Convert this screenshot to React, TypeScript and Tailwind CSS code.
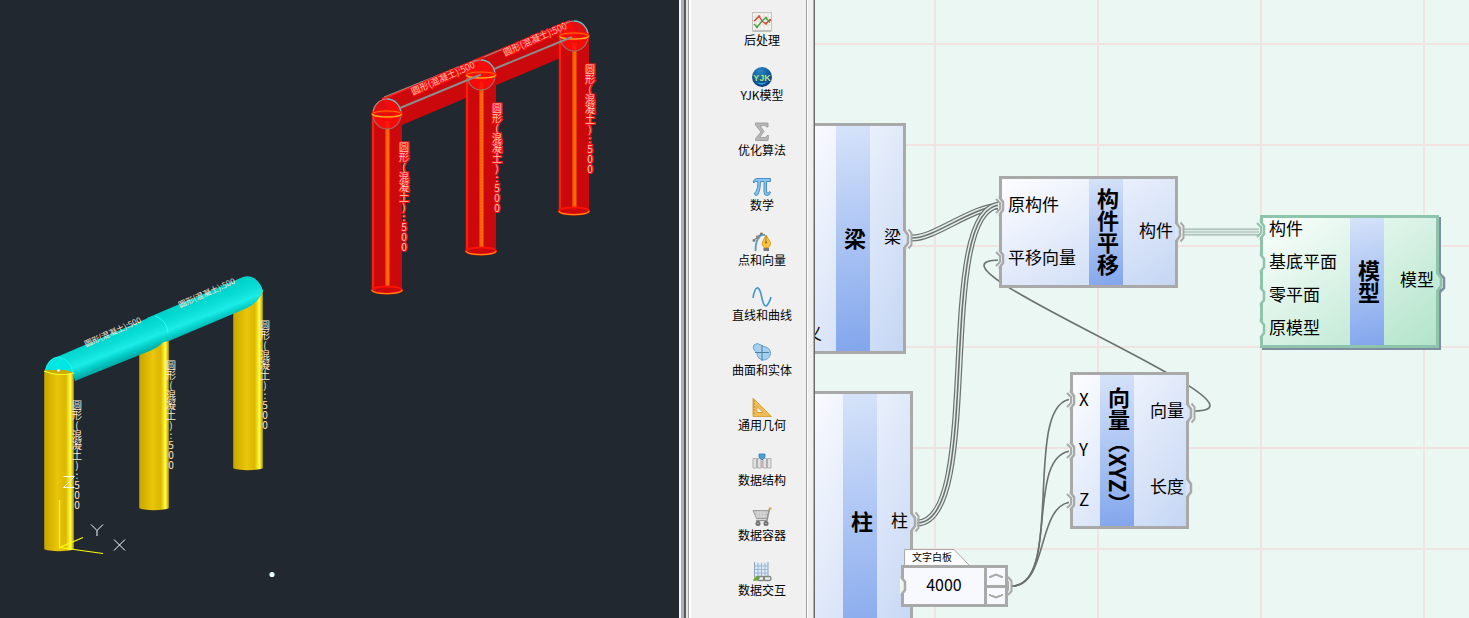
import type { ReactNode } from "react";

const LABEL = "圆形(混凝土):500";

/* ---------- 3D viewport ---------- */

function RedColumn({ x, top, bottom }: { x: number; top: number; bottom: number }) {
  return (
    <g>
      <path d={`M${x} ${top}V${bottom}a15 4 0 0 0 30 0V${top}Z`} fill="#cb080b" />
      <path d={`M${x + 1} ${top}V${bottom}`} stroke="#ff1c08" strokeWidth="2.4" />
      <path d={`M${x + 15.5} ${top + 6}V${bottom - 1}`} stroke="#ff6a00" strokeWidth="4" />
      <path d={`M${x + 14} ${top + 8}V${bottom - 1}`} stroke="#e04a10" strokeWidth="1" strokeDasharray="2 1" />
      <ellipse cx={x + 15} cy={bottom} rx="15" ry="3.6" fill="#cb080b" stroke="#ff1000" strokeWidth="2" />
      <path d={`M${x} ${bottom}a15 3.6 0 0 0 30 0`} fill="none" stroke="#ff8a10" strokeWidth="1.2" />
    </g>
  );
}

function RedJoint({ x, y }: { x: number; y: number }) {
  return (
    <g>
      <circle cx={x} cy={y} r="15" fill="#ff0a0a" fillOpacity="0.85" />
      <path d={`M${x - 14} ${y}a14 15 0 0 0 28 0`} fill="none" stroke="#9a6a68" strokeWidth="1.2" />
      <path d={`M${x - 14} ${y}a14 15 0 0 1 14 -15`} fill="none" stroke="#b08a88" strokeWidth="1.2" />
      <path d={`M${x} ${y - 15}a14 15 0 0 1 14 15`} fill="none" stroke="#62c4c8" strokeWidth="1.4" />
      <ellipse cx={x} cy={y} rx="14.5" ry="3" fill="none" stroke="#ff1800" strokeWidth="3" />
      <ellipse cx={x} cy={y} rx="14.5" ry="3" fill="none" stroke="#ff6a10" strokeWidth="1" />
      <path d={`M${x - 14.5} ${y}a14.5 3 0 0 0 29 0`} fill="none" stroke="#ffb020" strokeWidth="1.2" />
    </g>
  );
}

function YellowColumn({ x, top, bottom }: { x: number; top: number; bottom: number }) {
  return <path d={`M${x} ${top}V${bottom}a15.5 3 0 0 0 30 0V${top}Z`} fill="url(#yellow)" />;
}

function ColumnTag({ x, y, red }: { x: number; y: number; red?: boolean }) {
  return (
    <text
      x={x}
      y={y}
      className="text-[10px] [text-orientation:upright] [writing-mode:vertical-rl]"
      fill={red ? "#ffc4b4" : "#ffe8d4"}
      stroke={red ? "#ff1010" : "none"}
      strokeWidth="2"
      paintOrder="stroke"
    >
      {LABEL}
    </text>
  );
}

function BeamTag({ x, y, red }: { x: number; y: number; red?: boolean }) {
  return (
    <text
      transform={`translate(${x} ${y}) rotate(-24)`}
      className={red ? "text-[9px]" : "text-[8px]"}
      fill={red ? "#ffc4b4" : "#ffe8d4"}
      stroke={red ? "#ff1010" : "none"}
      strokeWidth="2"
      paintOrder="stroke"
    >
      {LABEL}
    </text>
  );
}

function Viewport() {
  return (
    <section aria-label="三维视图" className="min-w-0 flex-[679] overflow-hidden bg-[#222830]">
      <svg width="679" height="618" className="block">
        <defs>
          <linearGradient id="yellow">
            <stop offset="0" stopColor="#8f7c08" />
            <stop offset="0.05" stopColor="#c9a800" />
            <stop offset="0.25" stopColor="#dcb800" />
            <stop offset="0.45" stopColor="#e8c60c" />
            <stop offset="0.72" stopColor="#dcb800" />
            <stop offset="0.8" stopColor="#f0d81c" />
            <stop offset="0.88" stopColor="#ffff4a" />
            <stop offset="0.94" stopColor="#e0cc20" />
            <stop offset="1" stopColor="#8f7c08" />
          </linearGradient>
          <linearGradient id="cyan" gradientUnits="userSpaceOnUse" x1="100" y1="338" x2="111" y2="366">
            <stop offset="0" stopColor="#00d2cc" />
            <stop offset="0.3" stopColor="#0adcd6" />
            <stop offset="0.6" stopColor="#1cece6" />
            <stop offset="0.8" stopColor="#04cec8" />
            <stop offset="1" stopColor="#00aaa6" />
          </linearGradient>
        </defs>

        <path d="M382 99 L570 21 L584 48 L402 125 Z" fill="#cb080b" />
        <path d="M382 99 L570 21" stroke="#ff1c14" strokeWidth="2" />
        <path d="M384 97 L476 60 M484 57 L568 22" stroke="#8c8c8c" strokeWidth="1" />
        <RedColumn x={372} top={115} bottom={290} />
        <RedColumn x={466} top={76} bottom={251} />
        <RedColumn x={559} top={37} bottom={211} />
        <RedJoint x={387} y={114} />
        <RedJoint x={481} y={75} />
        <RedJoint x={574} y={36} />
        <path d="M400 108 L481 74.500 M494 69 L572 37" stroke="#8c8c8c" strokeWidth="2" />
        <BeamTag x={413} y={95} red />
        <BeamTag x={505} y={56} red />
        <ColumnTag x={404} y={142} red />
        <ColumnTag x={497} y={103} red />
        <ColumnTag x={590} y={64} red />

        <YellowColumn x={233} top={290} bottom={468} />
        <YellowColumn x={139} top={330} bottom={508} />
        <YellowColumn x={44} top={371} bottom={549} />
        <path
          d="M147 318 L243 277 Q249 275 254 278 Q261 283 263 291 Q258 303 247 308 L169 341 L150 345 Z"
          fill="url(#cyan)"
        />
        <path
          d="M45 371 Q48 359 59 356 L148 318 Q154 314 161 320 Q169 326 168 335 Q163 345 152 350 L75 381 L73 373 Z"
          fill="url(#cyan)"
        />
        <path d="M155 316 Q167 320 168 333" fill="none" stroke="#2affff" />
        <path d="M45 371 Q48 358 58 357 Q70 358 73 373 Q60 374 45 371 Z" fill="#00e6e2" stroke="#20fafa" strokeWidth="0.8" />
        <path d="M45 370 H66 L74 373 Q60 376 45 371 Z" fill="#cfa900" />
        <path d="M44 371 Q58 377 74 373" fill="none" stroke="#ffff20" />
        <circle cx="58.500" cy="370.500" r="1.300" fill="#f4fff4" />

        <BeamTag x={86} y={347} />
        <BeamTag x={180} y={308} />
        <ColumnTag x={77} y={400} />
        <ColumnTag x={171} y={360} />
        <ColumnTag x={265} y={320} />

        <path d="M59.500 500V547.500L83 537.500M59.500 547.500L103 553.500" fill="none" stroke="#ffff00" strokeWidth="1.200" />
        <g fill="none" stroke="#ffffff" strokeWidth="1">
          <path d="M63.500 476.500H74.500L63.500 487.500H74.500" />
          <path d="M91 524.500L97 530.500L103 524.500M97 530.500V536" />
          <path d="M114 539.500L125 550.500M125 539.500L114 550.500" />
        </g>
        <circle cx="272" cy="574.500" r="2.600" fill="#eaffff" />
      </svg>
    </section>
  );
}

/* ---------- category toolbar ---------- */

function Icon({ children }: { children: ReactNode }) {
  return (
    <svg width="20" height="20" viewBox="0 0 20 20" fill="none" aria-hidden="true">
      {children}
    </svg>
  );
}

const categories: { name: string; icon: ReactNode }[] = [
  {
    name: "后处理",
    icon: (
      <Icon>
        <rect x="0.5" y="0.5" width="19" height="18.5" fill="#f6f4f0" stroke="#c4c2be" />
        <path d="M1 19H19" stroke="#a8a6a2" />
        <path d="M4 1V18M8 1V18M12 1V18M16 1V18M1 5H19M1 9H19M1 13H19" stroke="#dcdad6" strokeWidth="0.8" />
        <path d="M2 9L7 4.500L11 10L14 11.500L18 8" stroke="#d43a2a" strokeWidth="1.200" />
        <path d="M2 12L5 15L11 8L14 6L18 10.500" stroke="#3f9a3a" strokeWidth="1.200" />
        <circle cx="7" cy="4.500" r="1.300" fill="#e0503c" />
        <circle cx="14" cy="11.500" r="1.300" fill="#e0503c" />
        <circle cx="18" cy="8" r="1.200" fill="#e0503c" />
        <circle cx="5" cy="15" r="1.300" fill="#4ca844" />
        <circle cx="14" cy="6" r="1.300" fill="#4ca844" />
      </Icon>
    ),
  },
  {
    name: "YJK模型",
    icon: (
      <Icon>
        <defs>
          <radialGradient id="globe" cx="0.4" cy="0.2" r="0.8">
            <stop offset="0" stopColor="#2c86c4" />
            <stop offset="0.5" stopColor="#14609c" />
            <stop offset="1" stopColor="#083a80" />
          </radialGradient>
        </defs>
        <circle cx="10" cy="10" r="10" fill="url(#globe)" />
        <path d="M4 15Q10 21 16 14Q11 17.500 4 15Z" fill="#2aa4dc" />
        <text
          x="10"
          y="13.500"
          textAnchor="middle"
          className="font-['Liberation_Sans',sans-serif] text-[9px] font-bold"
          fill="#b4e484"
        >
          YJK
        </text>
      </Icon>
    ),
  },
  {
    name: "优化算法",
    icon: (
      <Icon>
        <path
          d="M3.500 1H16V5H14.500Q14 3.500 12.500 3.500H8L12 9.500L7.500 15.500H13Q14.500 15.500 15 13.500H16.500L16 18.500H3.500V16.500L9 10L3.500 3Z"
          fill="#b8b8b8"
          stroke="#969696"
          strokeWidth="0.800"
        />
      </Icon>
    ),
  },
  {
    name: "数学",
    icon: (
      <Icon>
        <path
          d="M1 5Q2 1.500 5 1.500H18.500V4.500H14.500V14Q14.500 16 16 16Q17 16 17.500 14.500L18.500 15Q18 18.500 15 18.500Q12 18.500 12 15V4.500H8.500Q8.500 13 6 17.500Q4 19.500 2.500 17.500Q2 16 4 14.500Q6 11 6 4.500H4Q2.500 4.500 2 6Z"
          fill="#8cc4ee"
          stroke="#3a86c0"
          strokeWidth="0.900"
        />
      </Icon>
    ),
  },
  {
    name: "点和向量",
    icon: (
      <Icon>
        <path d="M3.500 19Q3.500 8 8 4Q10 2.500 13 3" stroke="#5a9cc4" strokeWidth="1.800" />
        <path d="M1 9L10 1" stroke="#666666" strokeWidth="1" />
        <circle cx="2" cy="8.500" r="1.400" fill="#777777" />
        <circle cx="9.500" cy="1.800" r="1.400" fill="#777777" />
        <rect x="4" y="3.500" width="3.500" height="3.500" fill="#8a8a8a" />
        <path d="M14 3L18.500 10.500Q19 13.500 16.500 15.500H12Q9.500 13 10.500 10Z" fill="#f8c440" stroke="#d09018" strokeWidth="0.800" />
        <path d="M14 4V10" stroke="#a86c10" strokeWidth="0.800" />
        <circle cx="14" cy="10.500" r="1" fill="#8c5c10" />
        <path d="M11.500 16H17V19H11.500Z" fill="#777777" />
      </Icon>
    ),
  },
  {
    name: "直线和曲线",
    icon: (
      <Icon>
        <path d="M1 11C3 -2 7 -1.500 9 7C11 17 13 22 16 17Q18 14 19 10" stroke="#3e98cc" strokeWidth="1.600" />
      </Icon>
    ),
  },
  {
    name: "曲面和实体",
    icon: (
      <Icon>
        <path
          d="M2 3Q5 0 9 3Q11 5 14 5Q19 7 18.500 12Q17 18 11 18Q5 17 5 11Q4 9 2 8Q0.500 5.500 2 3Z"
          fill="#a4d0ee"
          stroke="#5c9ccc"
          strokeWidth="0.900"
        />
        <path d="M10 3V19M3 10.500H17" stroke="#4c80a4" strokeWidth="1" />
      </Icon>
    ),
  },
  {
    name: "通用几何",
    icon: (
      <Icon>
        <path d="M1 1L19.500 19.500H1ZM5 9.500V15.500H11Z" fill="#f0bc54" fillRule="evenodd" stroke="#d89c34" strokeWidth="0.900" />
        <path d="M1 4H3M1 7H3M1 10H3M1 13H3M1 16H3" stroke="#a8741c" strokeWidth="0.700" />
      </Icon>
    ),
  },
  {
    name: "数据结构",
    icon: (
      <Icon>
        <path d="M1 6.500H4.500V16H1ZM5.500 6.500H9V16H5.500ZM11 6.500H14.500V16H11ZM15.500 6.500H19V16H15.500Z" fill="#e2e2e2" stroke="#a8a8a8" strokeWidth="0.900" />
        <path d="M7 2H13V5L10 8L7 5Z" fill="#4ca0dc" stroke="#2a78b8" strokeWidth="0.800" />
        <path d="M10 8.500V16" stroke="#c08080" strokeWidth="0.800" />
      </Icon>
    ),
  },
  {
    name: "数据容器",
    icon: (
      <Icon>
        <path d="M1 3.500H17L15 11.500H4.500Z" fill="#c4c4c4" stroke="#989898" strokeWidth="0.900" />
        <path d="M3 6H16M4 9H15.500M6 4V11M9 4V11M12 4V11" stroke="#e4e4e4" strokeWidth="0.600" />
        <path d="M19 1.500H17.500L15 13.500H4" stroke="#949494" strokeWidth="1.500" />
        <rect x="17" y="0.500" width="2.500" height="2" fill="#f0a030" />
        <circle cx="6" cy="16.500" r="2.500" fill="#6c6c6c" />
        <circle cx="14" cy="16.500" r="2.500" fill="#6c6c6c" />
        <circle cx="6" cy="16.500" r="0.800" fill="#cccccc" />
        <circle cx="14" cy="16.500" r="0.800" fill="#cccccc" />
      </Icon>
    ),
  },
  {
    name: "数据交互",
    icon: (
      <Icon>
        <rect x="2.500" y="0.500" width="13.500" height="15" fill="#dce8f4" />
        <path d="M2.500 0V15.500M16 0V15.500" stroke="#90a4bc" />
        <path d="M6 1V15M9.500 1V15M13 1V15M3 4H16M3 7.500H16M3 11H16" stroke="#94b4d8" strokeWidth="0.900" />
        <path d="M1 19Q2 14.500 6 13.500L8 16L6 18.500Z" fill="#6cac34" />
        <rect x="5.500" y="14.500" width="7" height="4" rx="2" stroke="#808880" strokeWidth="1.300" />
        <rect x="11.500" y="14.500" width="7.500" height="4" rx="2" stroke="#808880" strokeWidth="1.300" />
      </Icon>
    ),
  },
];

function Toolbar() {
  return (
    <div className="flex flex-none">
      <div className="w-0.5 bg-[#fafafa]" />
      <div className="w-[3px] bg-[#adadb9]" />
      <div className="w-0.5 bg-[#5c5a58]" />
      <div className="w-[3px] border-r border-[#a0a0a0] bg-[#e6e4e2]" />
      <div className="w-0.5 bg-white" />
      <nav aria-label="组件分类" className="flex w-[115px] flex-col bg-[#f0f0f0] pt-3 pl-[26px]">
        {categories.map((c) => (
          <button
            key={c.name}
            type="button"
            className="flex h-[55px] w-[90px] flex-none flex-col items-center justify-start text-xs leading-4 text-black"
          >
            {c.icon}
            <span className="whitespace-nowrap">{c.name}</span>
          </button>
        ))}
      </nav>
      <div className="w-0.5 border-l border-[#a0a0a0] bg-white" />
      <div className="w-[5px] bg-[#f0f0f0]" />
      <div className="w-0.5 border-r border-[#6a6a6a] bg-[#b0b0b0]" />
    </div>
  );
}

/* ---------- node canvas ---------- */

type Tone = "blue" | "green";

function Port({ side, tone = "blue", linked }: { side: "in" | "out"; tone?: Tone; linked?: boolean }) {
  const stroke = tone === "green" ? "#8ec4ab" : "#a9a9a9";
  const inside = tone === "green" ? "#c4ead8" : "#d9e4f8";
  return (
    <svg
      width="16"
      height="24"
      viewBox="0 0 16 24"
      fill="none"
      aria-hidden="true"
      className={
        side === "in"
          ? "absolute top-1/2 -left-[7px] -translate-y-1/2"
          : "absolute top-1/2 -right-[13px] -translate-y-1/2"
      }
    >
      {tone === "green" && side === "out" && (
        <path d="M7 4L11 8V18L7 22" stroke="#7f8da0" strokeWidth="2.500" />
      )}
      <path d="M3 4H6L9 8V16L6 20H3Z" fill={side === "in" ? "#eaf7f3" : inside} />
      <path d="M5 2V4L8 8V16L5 20V22" stroke={stroke} strokeWidth="2.500" />
      {linked && side === "in" && <path d="M1 5L5 9V15L1 19" stroke={stroke} strokeWidth="2" />}
      {linked && side === "out" && <path d="M8.500 2.500L11.500 6V18L8.500 21.500" stroke={stroke} strokeWidth="2" />}
    </svg>
  );
}

type PortDef = { name: string; linked?: boolean };

function Node({
  title,
  inputs,
  outputs,
  place,
  inputClass = "flex-1",
  outputWidth = "w-[52px]",
  tone = "blue",
}: {
  title: string;
  inputs: PortDef[];
  outputs: PortDef[];
  place: string;
  inputClass?: string;
  outputWidth?: string;
  tone?: Tone;
}) {
  const skin =
    tone === "green"
      ? "border-[#8ec4ab] bg-linear-to-br from-[#fbfffd] to-[#b2e4cb] shadow-[2px_2px_0_#7f8da0]"
      : "border-[#a9a9a9] bg-linear-to-br from-[#fdfdff] to-[#c5d6f4]";
  return (
    <article className={`absolute flex border-[3px] ${skin} ${place}`}>
      <ul className="flex min-w-0 flex-1 flex-col justify-end">
        {inputs.map((p) => (
          <li key={p.name} className={`relative flex items-center pl-1.5 ${inputClass}`}>
            <Port side="in" tone={tone} linked={p.linked} />
            <span className="pb-[3px]">{p.name}</span>
          </li>
        ))}
      </ul>
      <h2 className="flex w-[34px] flex-none items-center justify-center bg-linear-170 from-[#d6e3f9] to-[#82a5ec] pl-[3px] text-[22px] leading-[31px] font-bold whitespace-nowrap [writing-mode:vertical-rl]">
        {title}
      </h2>
      <ul className={`flex flex-none flex-col ${outputWidth}`}>
        {outputs.map((p) => (
          <li key={p.name} className="relative flex flex-1 items-center justify-end pr-0.5">
            <span className="pb-[5px]">{p.name}</span>
            <Port side="out" tone={tone} linked={p.linked} />
          </li>
        ))}
      </ul>
    </article>
  );
}

function ListWire({ d, color = "#6c7270", core = color }: { d: string; color?: string; core?: string }) {
  return (
    <g fill="none">
      <path d={d} stroke={color} strokeWidth="7" />
      <path d={d} stroke="#e2eeea" strokeWidth="4.600" />
      <path d={d} stroke={core} strokeWidth="1.600" />
    </g>
  );
}

function TextBoard() {
  return (
    <div className="absolute top-[549px] left-[86px] flex w-[107px] flex-col">
      <label htmlFor="board" className="relative ml-[3px] flex h-4 w-[66px] items-center pl-2 text-[10px] leading-4">
        <svg width="67" height="17" className="absolute top-0 left-0" aria-hidden="true">
          <path d="M0.500 17V0.500H50L66 17" fill="#fcfcff" stroke="#a9a9a9" />
        </svg>
        <span className="relative">文字白板</span>
      </label>
      <div className="relative flex h-[42px] border-[3px] border-[#a9a9a9] bg-[#f8f8ff]">
        <div className="relative flex min-w-0 flex-1">
          <Port side="in" />
          <input
            id="board"
            defaultValue="4000"
            className="w-full min-w-0 bg-transparent pb-1 text-center text-base outline-none"
          />
        </div>
        <div className="relative flex w-[21px] flex-col border-l-[3px] border-[#a9a9a9]">
          <button type="button" aria-label="增加" className="flex flex-1 items-center justify-center border-b-[3px] border-[#a9a9a9]">
            <svg width="14" height="6" viewBox="0 0 14 6" fill="none" aria-hidden="true">
              <path d="M1 5V4L7 1.500L13 4V5" stroke="#a9a9a9" strokeWidth="2" />
            </svg>
          </button>
          <button type="button" aria-label="减少" className="flex flex-1 items-center justify-center">
            <svg width="14" height="6" viewBox="0 0 14 6" fill="none" aria-hidden="true">
              <path d="M1 1V2L7 4.500L13 2V1" stroke="#a9a9a9" strokeWidth="2" />
            </svg>
          </button>
          <svg width="8" height="24" viewBox="0 0 8 24" fill="none" aria-hidden="true" className="absolute top-1/2 -right-2 -translate-y-1/2">
            <path d="M1 6L3 8V16L1 18" stroke="#a9a9a9" strokeWidth="2" />
            <path d="M3 3L6.500 7V17L3 21" stroke="#a9a9a9" strokeWidth="2" />
          </svg>
        </div>
      </div>
    </div>
  );
}

function Canvas() {
  return (
    <main className="relative min-w-0 flex-[654] overflow-hidden bg-[#eaf7f3] text-[17px] leading-6 text-black">
      <svg width="100%" height="100%" className="absolute inset-0" aria-hidden="true">
        <defs>
          <pattern id="grid" x="119" y="43" width="163" height="101" patternUnits="userSpaceOnUse">
            <path d="M1 0V101M0 1H163" stroke="#f0e3e1" strokeWidth="2" />
          </pattern>
        </defs>
        <rect width="100%" height="100%" fill="url(#grid)" />
        <g transform="translate(-815 0)">
          <ListWire d="M912 238C936 238 972 206 1001 206" />
          <ListWire d="M917 523C985 523 933 205 1001 205" />
          <ListWire d="M1183 232H1263" color="#9fb3ab" core="#b4c8c0" />
          <g fill="none" stroke="#6c7270" strokeWidth="1.600">
            <path d="M1194 411C1292 411 902 260 1000 260" />
            <path d="M1012 586C1066 586 1021 399 1073 399" />
            <path d="M1012 586C1060 586 1024 451 1073 451" />
            <path d="M1012 586C1049 586 1036 502 1073 502" />
          </g>
        </g>
      </svg>

      <Node
        title="梁"
        inputs={[{ name: "义" }]}
        outputs={[{ name: "梁", linked: true }]}
        place="top-[123px] -left-[20px] h-[231px] w-[111px]"
        inputClass="h-[33px] justify-end pr-[14px]"
        outputWidth="w-[33px]"
      />
      <Node
        title="柱"
        inputs={[]}
        outputs={[{ name: "柱", linked: true }]}
        place="top-[391px] -left-[20px] h-[262px] w-[118px]"
        outputWidth="w-[33px]"
      />
      <Node
        title="构件平移"
        inputs={[{ name: "原构件", linked: true }, { name: "平移向量", linked: true }]}
        outputs={[{ name: "构件", linked: true }]}
        place="top-[176px] left-[184px] h-[112px] w-[179px]"
      />
      <Node
        title="模型"
        inputs={[{ name: "构件", linked: true }, { name: "基底平面" }, { name: "零平面" }, { name: "原模型" }]}
        outputs={[{ name: "模型" }]}
        place="top-[215px] left-[445px] h-[133px] w-[179px]"
        inputClass="h-[33px] flex-none"
        tone="green"
      />
      <Node
        title="向量（XYZ）"
        inputs={[{ name: "X", linked: true }, { name: "Y", linked: true }, { name: "Z", linked: true }]}
        outputs={[{ name: "向量", linked: true }, { name: "长度" }]}
        place="top-[372px] left-[255px] h-[157px] w-[119px]"
      />
      <TextBoard />
    </main>
  );
}

export default function App() {
  return (
    <div
      lang="zh-CN"
      className="flex h-screen overflow-hidden font-['Noto_Sans_CJK_SC',sans-serif]"
    >
      <Viewport />
      <Toolbar />
      <Canvas />
    </div>
  );
}
